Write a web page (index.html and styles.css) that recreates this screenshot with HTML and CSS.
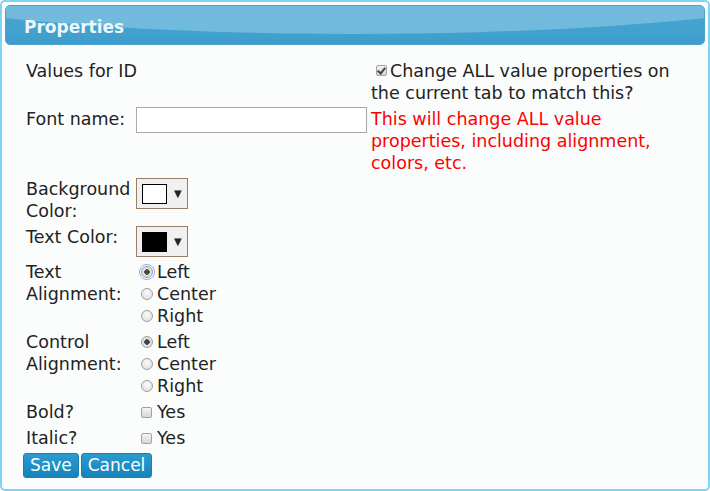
FILE: index.html
```html
<!DOCTYPE html>
<html>
<head>
<meta charset="utf-8">
<title>Properties</title>
<link rel="stylesheet" href="styles.css">
</head>
<body>
<div class="frame">
  <div class="header"><span class="title">Properties</span></div>
  <div class="content">
    <div class="grid">
      <div class="cell span2">Values for ID</div>
      <div class="cell right"><label class="chk-label"><input type="checkbox" class="chk chk-top" checked>Change ALL value properties on the current tab to match this?</label></div>

      <div class="cell label">Font name:</div>
      <div class="cell"><input type="text" class="text-input"></div>
      <div class="cell right warn">This will change ALL value properties, including alignment, colors, etc.</div>

      <div class="cell label">Background Color:</div>
      <div class="cell"><span class="picker"><span class="swatch swatch-white"></span><span class="arrow">▼</span></span></div>

      <div class="cell label">Text Color:</div>
      <div class="cell"><span class="picker"><span class="swatch swatch-black"></span><span class="arrow">▼</span></span></div>

      <div class="cell label">Text Alignment:</div>
      <div class="cell options">
        <label class="opt"><input type="radio" name="ta" class="radio focus" checked>Left</label>
        <label class="opt"><input type="radio" name="ta" class="radio">Center</label>
        <label class="opt"><input type="radio" name="ta" class="radio">Right</label>
      </div>

      <div class="cell label">Control Alignment:</div>
      <div class="cell options">
        <label class="opt"><input type="radio" name="ca" class="radio" checked>Left</label>
        <label class="opt"><input type="radio" name="ca" class="radio">Center</label>
        <label class="opt"><input type="radio" name="ca" class="radio">Right</label>
      </div>

      <div class="cell label">Bold?</div>
      <div class="cell"><label class="opt"><input type="checkbox" class="chk">Yes</label></div>

      <div class="cell label">Italic?</div>
      <div class="cell"><label class="opt"><input type="checkbox" class="chk">Yes</label></div>
    </div>
    <div class="buttons">
      <button class="btn">Save</button><button class="btn">Cancel</button>
    </div>
  </div>
</div>
</body>
</html>
```
FILE: styles.css
```css
html, body {
  margin: 0;
  padding: 0;
  background: #ffffff;
}
body {
  font-family: "DejaVu Sans", Verdana, sans-serif;
  font-size: 17.5px;
  line-height: 22px;
  color: #222222;
}
.frame {
  box-sizing: border-box;
  width: 710px;
  height: 491px;
  border: 2px solid #7fd3f3;
  border-radius: 5px;
  background: #fbfdfd;
  padding: 3px;
}
.header {
  position: relative;
  overflow: hidden;
  height: 38px;
  border: 1px solid #4d9fcc;
  border-radius: 5px;
  background: linear-gradient(#4aa6d2, #3e9ecb);
  display: flex;
  align-items: center;
  padding-left: 18px;
}
.header::before {
  content: "";
  position: absolute;
  left: -40%;
  top: -158px;
  width: 180%;
  height: 186px;
  border-radius: 50%;
  background: linear-gradient(#7bc0e0, #70bade);
}
.title {
  position: relative;
  top: 2px;
  font-weight: bold;
  font-size: 17px;
  color: #eef6fb;
}
.content {
  padding: 15px 0 0 21px;
}
.grid {
  display: grid;
  grid-template-columns: 110px 235px 313px;
  row-gap: 4px;
  align-items: start;
}
.span2 {
  grid-column: 1 / 3;
}
.right {
  grid-column: 3;
}
.label {
  grid-column: 1;
}
.chk-label {
  display: block;
}
.warn {
  color: #ff0000;
}
.text-input {
  box-sizing: border-box;
  width: 231px;
  height: 26px;
  margin: -1px 0 0 0;
  border: 1px solid #a9a9a9;
  background: #ffffff;
  font: inherit;
  padding: 0 4px;
}
.picker {
  box-sizing: border-box;
  display: flex;
  align-items: center;
  width: 52px;
  height: 31px;
  border: 1px solid #9a7e66;
  background: #f0f0f0;
  padding-left: 5px;
}
.swatch {
  box-sizing: border-box;
  display: block;
  width: 25px;
  height: 20px;
  border: 1px solid #000000;
}
.swatch-white { background: #ffffff; }
.swatch-black { background: #000000; }
.arrow {
  font-size: 10px;
  line-height: 10px;
  color: #222222;
  margin-left: 7px;
}
.options {
  display: flex;
  flex-direction: column;
}
.opt {
  display: flex;
  align-items: center;
  height: 22px;
}
.radio {
  appearance: none;
  -webkit-appearance: none;
  box-sizing: border-box;
  width: 12px;
  height: 12px;
  margin: 0 4px 0 5px;
  border: 1px solid #9e9e9e;
  border-radius: 50%;
  background: radial-gradient(circle at 50% 35%, #fbfbfb, #dcdcdc);
  position: relative;
}
.radio:checked {
  background: radial-gradient(circle, #444444 0 2.5px, #e4e4e4 3px, #d8d8d8);
}
.radio.focus {
  outline: 1px solid #86aef5;
  outline-offset: 1px;
}
.chk {
  appearance: none;
  -webkit-appearance: none;
  box-sizing: border-box;
  width: 11px;
  height: 11px;
  margin: 0 5px 0 5px;
  border: 1px solid #a2a2a2;
  border-radius: 2px;
  background: linear-gradient(#f4f4f4, #d6d6d6);
  position: relative;
}
.chk:checked::after {
  content: "";
  position: absolute;
  left: 2px;
  top: 0px;
  width: 3px;
  height: 6px;
  border: solid #444444;
  border-width: 0 2px 2px 0;
  transform: rotate(40deg);
}
.chk-top {
  margin: 0 3px 0 5px;
  vertical-align: 1px;
}
.buttons {
  display: flex;
  gap: 2px;
  margin-top: 4px;
  margin-left: -3px;
}
.btn {
  font: inherit;
  font-size: 17px;
  line-height: 23px;
  height: 25px;
  color: #ffffff;
  padding: 0 6px;
  border: 1px solid #1d7fb0;
  border-radius: 3px;
  background: linear-gradient(#2b9bd0, #1683bb);
  margin: 0;
}
```
